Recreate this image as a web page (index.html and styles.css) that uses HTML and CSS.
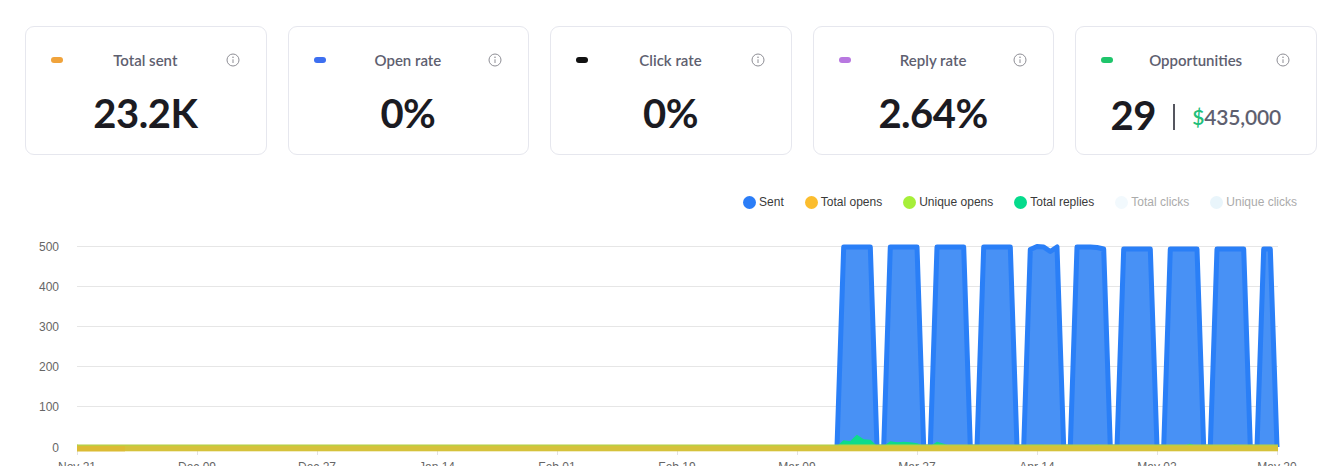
FILE: index.html
```html
<!DOCTYPE html>
<html lang="en">
<head>
<meta charset="UTF-8">
<meta name="viewport" content="width=device-width, initial-scale=1.0">
<title>Campaign Analytics</title>
<link rel="stylesheet" href="styles.css">
</head>
<body>
    <div class="stats">
        <div class="card">
            <div class="card-head">
                <span class="pill orange"></span>
                <span class="card-title">Total sent</span>
                <svg class="info" viewBox="0 0 14 14"><circle cx="7" cy="7" r="6"/><line x1="7" y1="6.3" x2="7" y2="10"/><circle class="dot" cx="7" cy="4.3" r="0.8"/></svg>
            </div>
            <div class="card-value">23.2K</div>
        </div>
        <div class="card">
            <div class="card-head">
                <span class="pill blue"></span>
                <span class="card-title">Open rate</span>
                <svg class="info" viewBox="0 0 14 14"><circle cx="7" cy="7" r="6"/><line x1="7" y1="6.3" x2="7" y2="10"/><circle class="dot" cx="7" cy="4.3" r="0.8"/></svg>
            </div>
            <div class="card-value">0%</div>
        </div>
        <div class="card">
            <div class="card-head">
                <span class="pill black"></span>
                <span class="card-title">Click rate</span>
                <svg class="info" viewBox="0 0 14 14"><circle cx="7" cy="7" r="6"/><line x1="7" y1="6.3" x2="7" y2="10"/><circle class="dot" cx="7" cy="4.3" r="0.8"/></svg>
            </div>
            <div class="card-value">0%</div>
        </div>
        <div class="card">
            <div class="card-head">
                <span class="pill purple"></span>
                <span class="card-title">Reply rate</span>
                <svg class="info" viewBox="0 0 14 14"><circle cx="7" cy="7" r="6"/><line x1="7" y1="6.3" x2="7" y2="10"/><circle class="dot" cx="7" cy="4.3" r="0.8"/></svg>
            </div>
            <div class="card-value">2.64%</div>
        </div>
        <div class="card">
            <div class="card-head">
                <span class="pill green"></span>
                <span class="card-title">Opportunities</span>
                <svg class="info" viewBox="0 0 14 14"><circle cx="7" cy="7" r="6"/><line x1="7" y1="6.3" x2="7" y2="10"/><circle class="dot" cx="7" cy="4.3" r="0.8"/></svg>
            </div>
            <div class="card-value">
                29<span class="divider"></span><span class="amount"><span class="dollar">$</span>435,000</span>
            </div>
        </div>
    </div>

    <div class="chart">
        <div class="legend">
            <span class="legend-item"><i class="swatch sent"></i>Sent</span>
            <span class="legend-item"><i class="swatch opens"></i>Total opens</span>
            <span class="legend-item"><i class="swatch unique"></i>Unique opens</span>
            <span class="legend-item"><i class="swatch replies"></i>Total replies</span>
            <span class="legend-item off"><i class="swatch clicks"></i>Total clicks</span>
            <span class="legend-item off"><i class="swatch uclicks"></i>Unique clicks</span>
        </div>

        <!-- plot drawn in page coordinates: viewBox starts at y=230 -->
        <svg class="plot" viewBox="0 230 1341 236" width="1341" height="236">
            <g class="grid">
                <line x1="77" y1="246.5" x2="1278" y2="246.5"/>
                <line x1="77" y1="286.5" x2="1278" y2="286.5"/>
                <line x1="77" y1="326.5" x2="1278" y2="326.5"/>
                <line x1="77" y1="366.5" x2="1278" y2="366.5"/>
                <line x1="77" y1="406.5" x2="1278" y2="406.5"/>
                <line x1="77" y1="446.5" x2="1278" y2="446.5"/>
            </g>
            <g class="ticks">
                <line x1="77.5" y1="444" x2="77.5" y2="455"/>
                <line x1="197.5" y1="449" x2="197.5" y2="455"/>
                <line x1="317.5" y1="449" x2="317.5" y2="455"/>
                <line x1="437.5" y1="449" x2="437.5" y2="455"/>
                <line x1="557.5" y1="449" x2="557.5" y2="455"/>
                <line x1="677.5" y1="449" x2="677.5" y2="455"/>
                <line x1="797.5" y1="449" x2="797.5" y2="455"/>
                <line x1="917.5" y1="449" x2="917.5" y2="455"/>
                <line x1="1037.5" y1="449" x2="1037.5" y2="455"/>
                <line x1="1157.5" y1="449" x2="1157.5" y2="455"/>
                <line x1="1277.5" y1="449" x2="1277.5" y2="455"/>
            </g>
            <g class="y-labels">
                <text x="59" y="250.5">500</text>
                <text x="59" y="290.5">400</text>
                <text x="59" y="330.5">300</text>
                <text x="59" y="370.5">200</text>
                <text x="59" y="410.5">100</text>
                <text x="59" y="452">0</text>
            </g>
            <g class="x-labels">
                <text x="77" y="471">Nov 21</text>
                <text x="197" y="471">Dec 09</text>
                <text x="317" y="471">Dec 27</text>
                <text x="437" y="471">Jan 14</text>
                <text x="557" y="471">Feb 01</text>
                <text x="677" y="471">Feb 19</text>
                <text x="797" y="471">Mar 09</text>
                <text x="917" y="471">Mar 27</text>
                <text x="1037" y="471">Apr 14</text>
                <text x="1157" y="471">May 02</text>
                <text x="1277" y="471">May 20</text>
            </g>

            <path class="sent-line" d="M837,447 L843.7,247 L850.3,247 L857,247 L863.7,247 L870.3,247 L877,447
                L883.7,447 L890.3,247 L897,247 L903.7,247 L910.3,247 L917,247 L923.7,447
                L930.3,447 L937,247 L943.7,247 L950.3,247 L957,247 L963.7,247 L970.3,447
                L977,447 L983.7,247 L990.3,247 L997,247 L1003.7,247 L1010.3,247 L1017,447
                L1023.7,447 L1030.3,249.5 L1037,246.5 L1043.7,247 L1050.3,251.5 L1057,247 L1063.7,447
                L1070.3,447 L1077,247 L1083.7,247 L1090.3,247 L1097,247.5 L1103.7,249 L1110.3,447
                L1117,447 L1123.7,249 L1130.3,249 L1137,249 L1143.7,249 L1150.3,249 L1157,447
                L1163.7,447 L1170.3,249 L1177,249 L1183.7,249 L1190.3,249 L1197,249 L1203.7,447
                L1210.3,447 L1217,249 L1223.7,249 L1230.3,249 L1237,249 L1243.7,249 L1250.3,447
                L1257,447 L1263.7,249 L1270.3,249 L1277,447"/>

            <path class="replies-line" d="M837,447 L843.7,441 L850.3,442 L857,435.5 L863.7,440 L870.3,440.5 L877,447
                L883.7,447 L890.3,442 L897,443 L903.7,442.5 L910.3,443 L917,444 L923.7,447
                L930.3,447 L937,442.5 L943.7,444.5 L950.3,447
                L1023,447 L1033,445.5 L1043,445.5 L1053,447
                L1090,447 L1097,445 L1104,447
                L1183,447 L1190,444.5 L1197,447
                L1228,447 L1235,445 L1242,447 L1277,447 Z"/>

            <rect class="band" x="77" y="444.7" width="1201" height="6.6"/>
            <rect class="band-early" x="77" y="446" width="48" height="5.3"/>
            <line class="band-top" x1="77" y1="445.2" x2="1278" y2="445.2"/>
        </svg>
    </div>
</body>
</html>
```

FILE: styles.css
```css
body {
    margin: 0;
    padding: 26px 24px 0 25px;
    background-color: #fff;
    font-family: "Lato", "Inter", sans-serif;
    color: #1b1b22;
    overflow: hidden;
}

.stats {
    display: flex;
    gap: 21px;
}

.card {
    flex: 1;
    height: 127px;
    border: 1px solid #e6e7ee;
    border-radius: 9px;
    padding: 0 26px 0 25px;
}

.card-head {
    display: grid;
    grid-template-columns: 1fr auto 1fr;
    align-items: center;
    height: 18px;
    margin-top: 24px;
}

.pill {
    width: 12px;
    height: 5.5px;
    border-radius: 3px;
}
.pill.orange { background-color: #f0a33b; }
.pill.blue { background-color: #3d6ff0; }
.pill.black { background-color: #111; }
.pill.purple { background-color: #b878e0; }
.pill.green { background-color: #1fc56b; }

.card-title {
    font-size: 15px;
    font-weight: 600;
    color: #5e606f;
}

.info {
    justify-self: end;
    width: 14px;
    height: 14px;
    fill: none;
    stroke: #8e8e95;
    stroke-width: 1;
}
.info .dot {
    fill: #8e8e95;
    stroke: none;
}

.card-value {
    display: flex;
    align-items: center;
    justify-content: center;
    margin-top: 20px;
    font-size: 40px;
    font-weight: 700;
    line-height: 48px;
    letter-spacing: -0.5px;
}

.divider {
    width: 2.5px;
    height: 26px;
    margin: 4px 17px 0 17px;
    background-color: #55565f;
}

.amount {
    font-size: 21px;
    font-weight: 600;
    color: #5e606f;
    letter-spacing: -0.2px;
    margin-top: 4px;
}
.amount .dollar {
    color: #22c07a;
}

.chart {
    margin: 0 -24px 0 -25px;
}

.legend {
    display: flex;
    justify-content: flex-end;
    gap: 21px;
    margin-top: 39px;
    padding-right: 44px;
    height: 16px;
    font-family: "Liberation Sans", Arial, sans-serif;
    font-size: 12px;
    line-height: 16px;
    color: #3a3a3a;
}

.legend-item {
    display: flex;
    align-items: center;
    gap: 3px;
}
.legend-item.off {
    color: #ababab;
}

.swatch {
    width: 13px;
    height: 13px;
    border-radius: 50%;
}
.swatch.sent { background-color: #2b7df7; }
.swatch.opens { background-color: #fbbd2e; }
.swatch.unique { background-color: #a6ef39; }
.swatch.replies { background-color: #05db8c; }
.swatch.clicks { background-color: #f2f9fd; }
.swatch.uclicks { background-color: #e9f5fb; }

.plot {
    display: block;
    margin-top: 20px;
    font-family: "Liberation Sans", Arial, sans-serif;
    font-size: 12px;
}

.grid line {
    stroke: #e6e6e6;
    stroke-width: 1;
}
.ticks line {
    stroke: #e2e2e2;
    stroke-width: 1;
}
.y-labels text {
    fill: #666;
    text-anchor: end;
}
.x-labels text {
    fill: #666;
    text-anchor: middle;
}

.sent-line {
    fill: #4891f5;
    stroke: #2a7ff7;
    stroke-width: 5;
    stroke-linejoin: round;
}
.replies-line {
    fill: #0ddc8b;
    stroke: #0ddc8b;
    stroke-width: 1.5;
    stroke-linejoin: round;
}
.band {
    fill: #d5c23b;
}
.band-early {
    fill: #dcbb34;
}
.band-top {
    stroke: #acd54b;
    stroke-width: 1;
}
```
